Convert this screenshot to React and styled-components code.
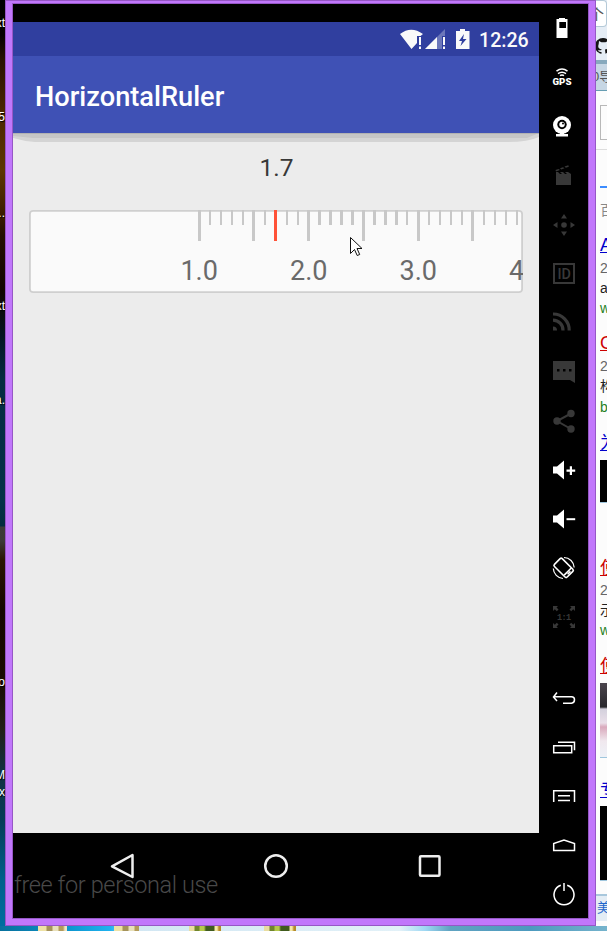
import React from "react";
import styled, { createGlobalStyle } from "styled-components";

const Global = createGlobalStyle`
  * { box-sizing: border-box; }
  body { margin: 0; overflow: hidden; font-family: Roboto, "Noto Sans CJK SC", sans-serif; }
`;

const Desktop = styled.div`
  width: 607px;
  height: 931px;
  display: grid;
  grid-template-columns: 5px 591px 11px;
  grid-template-rows: 926px 5px;
  overflow: hidden;
  background: #5aa5c8;
`;

const Wallpaper = styled.div`
  position: relative;
  overflow: hidden;
  background: linear-gradient(#000 0, #050100 35px, #2a1300 60px, #4a2600 110px, #5c3700 170px, #442200 205px,
    #241000 235px, #120500 290px, #061523 335px, #052c42 380px, #053248 500px, #042c40 526px, #3c3b39 527px,
    #3b3a38 541px, #2a1604 560px, #150700 610px, #190c02 680px, #232018 730px, #123142 770px, #053c58 820px,
    #00608c 880px, #006da0 926px);
`;

const IconLabel = styled.span`
  position: absolute;
  right: 0;
  top: ${(p) => p.$top}px;
  color: #fff;
  font: 12px/14px "Liberation Sans", sans-serif;
  text-shadow: 1px 1px 1px #000;
`;

const Taskline = styled.div`
  grid-column: 1 / 4;
  display: flex;
  background: linear-gradient(90deg, #08719c 0, #0b93cb 65px, #1fb2ef 110px, #d2e7f3 140px, #e2f1f8 400px, #9ed8f3 425px, #60a3c1 450px, #4c9abe 530px, #75b3cc 607px);
`;

const Thumb = styled.div`
  width: ${(p) => p.$w}px;
  margin-left: ${(p) => p.$gap}px;
  background: ${(p) => (p.$green
    ? "linear-gradient(90deg, #e9dda0 0 5px, #70852c 6px 10px, #b5c84c 11px 15px, #405b1d 17px 25px, #f4e8a6 26px 28px, #b68a29 30px)"
    : "linear-gradient(90deg, #eee2a5 0 8px, #a5935b 9px 14px, #e8e0ba 15px 20px, #b39b5b 21px 25px, #eee6c5 27px)")};
`;

const Emulator = styled.main`
  border: 7px solid #c177fb;
  border-top-width: 3px;
  padding: 1px;
  background: #000;
  box-shadow: inset 0 0 0 1px #9657c6;
  outline: 1px solid #9657c6;
  outline-offset: -1px;
  display: flex;
`;

const Device = styled.section`
  width: 526px;
  display: flex;
  flex-direction: column;
  padding-top: 18px;
`;

const StatusBar = styled.div`
  height: 34px;
  background: #303f9f;
  display: flex;
  align-items: center;
  padding: 2px 11px 0 386px;
  color: #fafafa;
  svg { flex: none; }
`;

const Clock = styled.span`
  font: 500 19.6px/24px Roboto, sans-serif;
  margin: 2px 0 0 -4px;
  white-space: nowrap;
`;

const AppBar = styled.header`
  height: 77px;
  background: #3f51b5;
  display: flex;
  align-items: center;
  padding: 5px 22px 0;
  color: #fff;
`;

const Title = styled.h1`
  margin: 0;
  font: 500 27.2px/32px Roboto, sans-serif;
`;

const Content = styled.div`
  height: 700px;
  background: #ececec;
  display: flex;
  flex-direction: column;
`;

const ShadowBand = styled.svg`
  display: block;
  height: 9px;
  width: 526px;
  flex: none;
`;

const Value = styled.output`
  height: 68px;
  padding-top: 10px;
  padding-left: 1px;
  text-align: center;
  font-size: 24.5px;
  line-height: 31px;
  color: #383838;
`;

const Ruler = styled.div`
  position: relative;
  width: 493.5px;
  height: 83px;
  margin-left: 16px;
  border-radius: 4px;
  background: #fafafa;
  box-shadow: inset 0 0 0 1.8px #cfcfcf;
  overflow: hidden;
  display: flex;
  padding-left: 164.7px;
`;

const Step = styled.div`
  flex: none;
  position: relative;
  width: 10.96px;
  display: flex;
  justify-content: center;
  align-items: flex-start;
`;

const Tick = styled.i`
  width: ${(p) => (p.$small ? 2.4 : 3)}px;
  height: ${(p) => (p.$small ? 15 : 31)}px;
  background: ${(p) => (p.$active ? "#ff5238" : "#c8c8c8")};
`;

const TickLabel = styled.span`
  position: absolute;
  top: 45px;
  left: 50%;
  transform: translateX(-50%);
  font-size: 27px;
  line-height: 32px;
  color: #6a6a6a;
`;

const Cursor = styled.svg`
  position: absolute;
  left: 321px;
  top: 27px;
`;

const NavBar = styled.nav`
  position: relative;
  height: 85px;
  display: flex;
  padding: 18px 32.5px 0;
  justify-content: space-between;
  align-items: flex-start;
`;

const NavButton = styled.div`
  width: 154px;
  display: flex;
  justify-content: center;
`;

const Watermark = styled.span`
  position: absolute;
  left: 1px;
  top: 38px;
  font: 300 23.5px/29px Roboto, sans-serif;
  letter-spacing: -0.38px;
  color: #494949;
  white-space: nowrap;
`;

const Rail = styled.aside`
  width: 49px;
  display: flex;
  flex-direction: column;
`;

const RailSlot = styled.div`
  height: 49px;
  flex: none;
  padding: 12px 12px 0;
  margin-top: ${(p) => p.$gap || 0}px;
  color: ${(p) => (p.$dim ? "#383838" : "#fff")};
  svg { display: block; overflow: visible; }
`;

const Browser = styled.div`
  background: #fcfcfc;
  overflow: hidden;
  display: flex;
  flex-direction: column;
  font-family: "Liberation Sans", "Noto Sans CJK SC", sans-serif;
`;

const TabStrip = styled.div`
  height: 60px;
  flex: none;
  background: #e5edf5;
  color: #555;
  font-size: 15px;
  svg { display: block; margin: 10px 0 0 0; }
`;

const BrowserTab = styled.div`
  height: 27px;
  width: 11px;
  line-height: 27px;
  background: #fff;
  border: 1px solid #b5cad8;
  border-left: 0;
  border-radius: 0 4px 4px 0;
  text-indent: -7px;
`;

const Bookmark = styled.div`
  height: 31px;
  flex: none;
  border-top: 4px solid #87a9bd;
  border-bottom: 1px solid #669db2;
  background: #c6d6e4;
  color: #555;
  font-size: 13px;
  line-height: 26px;
  text-indent: -4px;
  white-space: nowrap;
`;

const SearchBox = styled.div`
  height: 35px;
  flex: none;
  margin: 14px -4px 9px 4px;
  border: 1px solid #b8b8b8;
`;

const Rule = styled.div`
  height: ${(p) => p.$h}px;
  flex: none;
  margin-left: ${(p) => p.$inset || 0}px;
  background: ${(p) => p.$color};
`;

const Line = styled.div`
  height: 20px;
  flex: none;
  margin: ${(p) => p.$gap || 0}px 0 0 4px;
  font-size: ${(p) => (p.$link ? 18 : 14)}px;
  line-height: 20px;
  white-space: nowrap;
  color: ${(p) => p.$color};
  text-decoration: ${(p) => (p.$link ? "underline" : "none")};
`;

const Picture = styled.div`
  flex: none;
  height: ${(p) => p.$h}px;
  margin: ${(p) => p.$gap}px 0 0 4px;
  background: ${(p) => p.$bg || "#000"};
  border-bottom: 1px solid #9fc6dd;
`;

const FooterBar = styled.div`
  height: 27px;
  flex: none;
  margin-top: auto;
  margin-bottom: 5px;
  border-top: 2px solid #a8c7dc;
  background: #e4edf5;
  color: #1f66cc;
  font-size: 13px;
  line-height: 24px;
  text-indent: 1px;
`;

const Icon = ({ children }) => (
  <svg width="25" height="25" viewBox="0 0 25 25" fill="currentColor">{children}</svg>
);
const Speaker = () => <path d="M2 9.500h4l7-6v19l-7-6H2z" />;
const line = { fill: "none", stroke: "currentColor", strokeWidth: 1.5 };

const tools = [
  { id: "battery", art: <><path fillRule="evenodd" d="M8 2h6v1h2.5v19h-11V3H8zM8.3 6v6H15V6z" /></> },
  { id: "gps", art: <>
    <g {...line}><path d="M5.5 6.200q5.500-4.500 11 0M7 8.700q4-3 8 0M9 10.700q2-1.400 4 0" /></g>
    <text x="1.500" y="19.500" fontSize="9" fontWeight="900" fontFamily="Roboto" textLength="19" lengthAdjust="spacingAndGlyphs">GPS</text></> },
  { id: "camera", art: <>
    <circle cx="11" cy="11" r="9" /><path d="M5 20h12v2.5H5zM9 18h4v3H9z" />
    <circle cx="11" cy="10.5" r="4.7" fill="#000" /><circle cx="11" cy="10.5" r="2.7" /><circle cx="12" cy="9.5" r="1" fill="#000" /></> },
  { id: "clapper", dim: true, art: <>
    <path d="M5 12h15v10H5z" /><path d="M5 9h2l2 2h2L9 9h3l2 2h2l-2-2h3l3 2v1H5z" />
    <path d="M4.5 7l3-1 1.5 1-4 1.5zM9 5.3l3-1 1.5 1-3.2 1.2zM13.5 3.5l3.8-1.3.5 1.5-3 1z" /></> },
  { id: "move", dim: true, art: <>
    <circle cx="13" cy="13" r="2.8" /><path d="M13 2l3 4.5h-6zM13 24l3-4.500h-6zM2 13l4.500-3v6zM24 13l-4.500-3v6z" /></> },
  { id: "id", dim: true, art: <>
    <path {...line} strokeWidth="2" d="M3 3h20v19H3z" />
    <text x="6.500" y="18" fontSize="15" fontWeight="500" fontFamily="Roboto" textLength="13.500" lengthAdjust="spacingAndGlyphs">ID</text></> },
  { id: "rss", dim: true, art: <>
    <path d="M2 16.500a4 4 0 0 1 4 4H2z" /><g {...line} strokeWidth="3.200"><path d="M2 10.200a10 10 0 0 1 10 10.300M2 4a16 16 0 0 1 16.200 16.500" /></g></> },
  { id: "chat", dim: true, art: <>
    <path d="M2 2h22v22l-5-3H2z" /><path d="M6 10h2.500v2.500H6zM12 10h2.500v2.500H12zM18 10h2.500v2.500H18z" fill="#000" /></> },
  { id: "share", dim: true, art: <>
    <path {...line} strokeWidth="2" d="M20 5.500L6 13l14 8" /><circle cx="6" cy="13" r="3.700" /><circle cx="20" cy="5.500" r="3.700" /><circle cx="20" cy="21" r="3.700" /></> },
  { id: "louder", art: <><Speaker /><path d="M15.500 12.600h3.300V9.200h2.200v3.400h3.200v2.100H21v3.400h-2.200v-3.400h-3.300z" /></> },
  { id: "quieter", art: <><Speaker /><path d="M15.500 12.200h8.700v2h-8.700z" /></> },
  { id: "rotate", art: <>
    <g transform="rotate(-45 12.5 13)" {...line} strokeWidth="1.600"><rect x="7.200" y="4" width="11" height="18" rx="1.500" /><path d="M8 18.500h10" /><path d="M11 20.300h4" /></g>
    <path {...line} strokeWidth="1.200" d="M13 2.500a10.500 10.500 0 0 1 10.200 10M12 23.500A10.500 10.500 0 0 1 2.300 13.500" /></> },
  { id: "scale", dim: true, art: <>
    <path d="M2 2h5L5.500 3.500l2 2-1.700 1.700-2-2L2 7zM24 2v5l-1.800-1.800-2 2-1.700-1.700 2-2L19 2zM2 24v-5l1.800 1.800 2-2 1.700 1.700-2 2L7 24zM24 24h-5l1.500-1.500-2-2 1.700-1.700 2 2L24 19z" />
    <text x="6" y="16" fontSize="8.500" fontWeight="700" fontFamily="Liberation Mono" textLength="14">1:1</text></> },
  { id: "back", gap: 32, art: <path {...line} d="M6 7.500L2.500 12 6 16M2.500 11.800h18q3 0 3 3t-3 3.500H12" /> },
  { id: "recents", art: <path {...line} d="M2.700 11.700h18v7h-18zM7 8.200h16.500v8" /> },
  { id: "menu", art: <path {...line} d="M2.700 19V7.700h20.800V19M7 12.700h12M7 17.500h12" /> },
  { id: "home", art: <path {...line} d="M2.700 18.500v-7L13 8l10.500 3.500v7z" /> },
  { id: "power", art: <path {...line} d="M9.800 4.300a10 10 0 1 0 6.400 0M13 2v8" /> },
];

const steps = Array.from({ length: 31 }, (_, i) => 10 + i);

const labels = [
  [16, "ext"], [110, "5"], [206, "..."], [299, "ext"], [393, "a."], [675, "o"], [768, "M"], [785, "ox"],
];

export default function App() {
  return (
    <Desktop>
      <Global />
      <Wallpaper>
        {labels.map(([top, text]) => <IconLabel key={top} $top={top}>{text}</IconLabel>)}
      </Wallpaper>
      <Emulator>
        <Device>
          <StatusBar>
            <svg width="84" height="22" viewBox="0 0 84 22" fill="#fafafa">
              <path d="M1 5Q12-3.500 24 5l-2.500 2H18v7l-5.500 6z" />
              <path d="M20 8h2v8h-2zM20 17.500h2V20h-2z" />
              <path d="M26 20L46 0v7h-3v13z" opacity=".3" />
              <path d="M26 20L38 8v12zM44 8h2v8h-2zM44 17.500h2V20h-2z" />
              <path fillRule="evenodd" d="M61 0h5v2h4.500v18H57V2h4zM65 5l-5 7h3l-1.500 5 6-7h-3.500z" />
            </svg>
            <Clock>12:26</Clock>
          </StatusBar>
          <AppBar><Title>HorizontalRuler</Title></AppBar>
          <Content>
            <ShadowBand viewBox="0 0 526 9">
              <path d="M0 0h526v4q-11 5-32 5H22Q10 8 0 5z" fill="#d4d4d4" />
              <path d="M0 0h526l-12 5H20L0 3z" fill="#c6c6c6" />
              <path d="M0 0h526v1H0z" fill="#b2b2b2" />
            </ShadowBand>
            <Value>1.7</Value>
            <Ruler>
              {steps.map((n) => (
                <Step key={n}>
                  <Tick $active={n === 17} $small={n % 5 !== 0 && n !== 17} />
                  {n % 10 === 0 && <TickLabel>{(n / 10).toFixed(1)}</TickLabel>}
                </Step>
              ))}
              <Cursor width="13" height="21" viewBox="0 0 13 21">
                <path d="M.5.5v16l4-4 2.700 6 2.500-1-2.700-6h5z" fill="#fff" stroke="#111" />
              </Cursor>
            </Ruler>
          </Content>
          <NavBar>
            <Watermark>free for personal use</Watermark>
            <NavButton>
              <svg width="26" height="30" viewBox="0 0 26 30"><path d="M23.500 4v22L3 15.300z" fill="none" stroke="#eee" strokeWidth="2.500" strokeLinejoin="round" /></svg>
            </NavButton>
            <NavButton>
              <svg width="26" height="30" viewBox="0 0 26 30"><circle cx="13" cy="15" r="10.800" fill="none" stroke="#eee" strokeWidth="2.500" /></svg>
            </NavButton>
            <NavButton>
              <svg width="26" height="30" viewBox="0 0 26 30"><rect x="3" y="5.200" width="19.500" height="19.500" rx="1" fill="none" stroke="#eee" strokeWidth="2.500" /></svg>
            </NavButton>
          </NavBar>
        </Device>
        <Rail>
          {tools.map((t) => <RailSlot key={t.id} $dim={t.dim} $gap={t.gap}><Icon>{t.art}</Icon></RailSlot>)}
        </Rail>
      </Emulator>
      <Browser>
        <TabStrip>
          <BrowserTab>个</BrowserTab>
          <svg width="16" height="18" viewBox="0 0 16 18">
            <circle cx="7" cy="9" r="8" fill="#151515" />
            <path fill="#e5edf5" d="M3 4l2.500 1.300h4L12 4l.5 3q1.500 5-3.500 5.500l.5 4.500h-4v-2q-3 .5-3.500-2 2 .5 3.500 0v-.700Q1 11.500 2.700 7z" />
          </svg>
        </TabStrip>
        <Bookmark>0导</Bookmark>
        <SearchBox />
        <Rule $h={1} $color="#ddd" />
        <Rule $h={36} $color="transparent" />
        <Rule $h={2} $inset={4} $color="#3b8cff" />
        <Line $gap={12} $color="#888">百</Line>
        <Line $gap={15} $color="#0000cc" $link>A</Line>
        <Line $gap={3} $color="#666">2</Line>
        <Line $color="#222">a</Line>
        <Line $color="#238023">w</Line>
        <Line $gap={15} $color="#cc0000" $link>G</Line>
        <Line $gap={3} $color="#666">2</Line>
        <Line $color="#222">构</Line>
        <Line $gap={1} $color="#238023">b</Line>
        <Line $gap={16} $color="#0000cc" $link>为</Line>
        <Picture $gap={7} $h={43} />
        <Line $gap={55} $color="#cc0000" $link>使</Line>
        <Line $gap={2} $color="#666">2</Line>
        <Line $color="#222">示</Line>
        <Line $color="#238023">w</Line>
        <Line $gap={16} $color="#cc0000" $link>使</Line>
        <Picture $gap={7} $h={75} $bg="linear-gradient(#4b454d 0, #29282c 24px, #d3d0dc 26px, #eadfe9 40px, #d9a9bc 44px, #f0e8ee 58px, #eef1f7 74px)" />
        <Line $gap={22} $color="#0000cc" $link>专</Line>
        <Picture $gap={6} $h={75} />
        <FooterBar>美</FooterBar>
      </Browser>
      <Taskline>
        <Thumb $w={29} $gap={38} />
        <Thumb $w={25} $gap={47} />
        <Thumb $w={32} $gap={50} $green />
        <Thumb $w={32} $gap={43} $green />
      </Taskline>
    </Desktop>
  );
}
